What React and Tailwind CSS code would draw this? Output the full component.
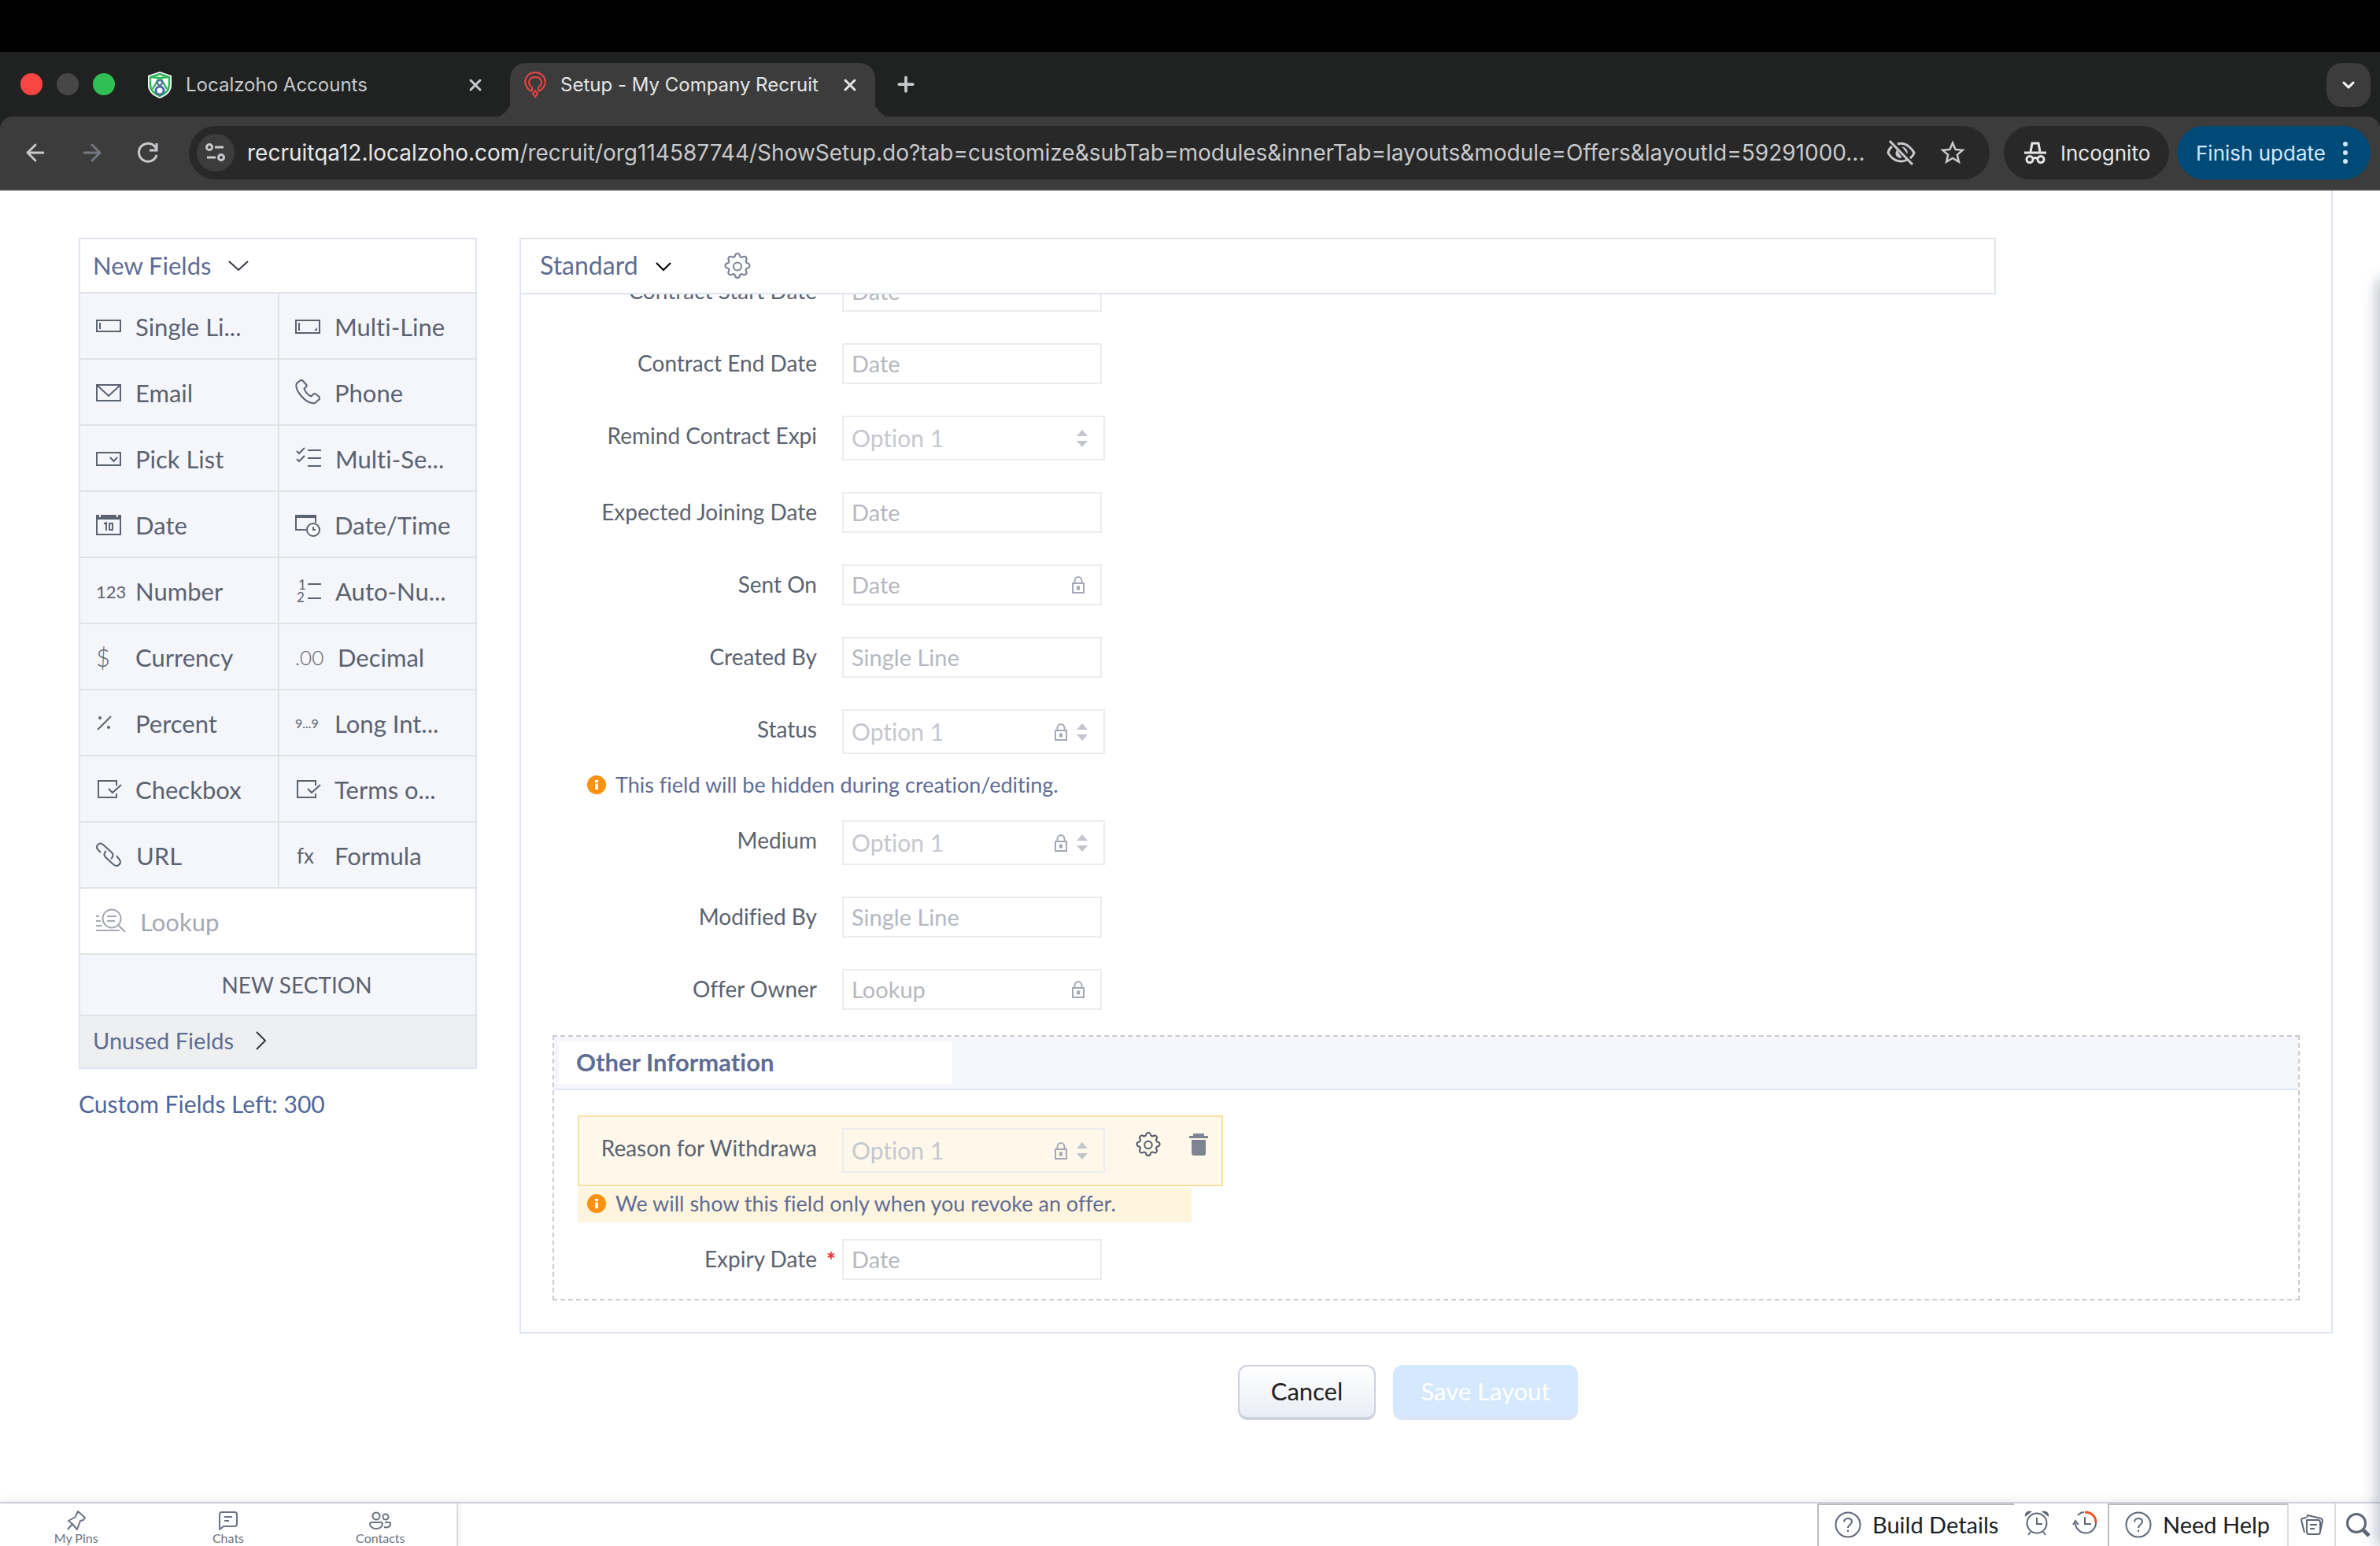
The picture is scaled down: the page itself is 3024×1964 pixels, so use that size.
import { ArrowLeft, ArrowRight, ChevronDown, Plus, X } from 'lucide-react';
import { MdOutlineStarBorder } from 'react-icons/md';

/* ── Icons ───────────────────────────────────── */
function Icon({ children, w = 32, h = 32, sw = 2, className = '' }) {
  return (
    <svg
      width={w}
      height={h}
      viewBox={`0 0 ${w} ${h}`}
      fill="none"
      stroke="currentColor"
      strokeWidth={sw}
      className={`shrink-0 overflow-visible ${className}`}
      aria-hidden="true"
    >
      {children}
    </svg>
  );
}

const CheckBoxIcon = () => (
  <Icon>
    <path d="M26 11V5H3v21h23v-5M16 15l5 5L32 10" />
  </Icon>
);

const GEAR =
  'M18 2c2 0 3 1.200 3.400 4l2.300 1c2.300-1.600 3.700-1.700 5.100-.3s1.300 2.800-.3 5.100l1 2.300c2.800.4 4 1.400 4 3.400s-1.200 3-4 3.400l-1 2.300c1.600 2.300 1.700 3.700.3 5.100s-2.800 1.300-5.100-.3l-2.300 1c-.4 2.800-1.400 4-3.400 4s-3-1.200-3.400-4l-2.300-1c-2.300 1.600-3.700 1.700-5.100.3s-1.300-2.800.3-5.100l-1-2.300c-2.800-.4-4-1.400-4-3.400s1.200-3 4-3.400l1-2.300c-1.600-2.300-1.700-3.700-.3-5.100s2.800-1.300 5.100.3l2.300-1c.4-2.800 1.400-4 3.400-4z';

const GearIcon = ({ size }) => (
  <svg width={size} height={size} viewBox="0 0 36 36" fill="none" stroke="currentColor" strokeWidth="2" aria-hidden="true">
    <path d={GEAR} />
    <circle cx="18" cy="18.500" r="5" />
  </svg>
);

const LockIcon = () => (
  <Icon w={16} h={22} className="text-[#a3a8b4]">
    <path d="M1 9h14v12H1zM3.500 9V6a4.500 5 0 0 1 9 0v3" />
    <path d="M8 12.500v5" strokeWidth="4" />
  </Icon>
);

const InfoIcon = () => (
  <svg width="24" height="24" viewBox="0 0 24 24" className="shrink-0" aria-hidden="true">
    <circle cx="12" cy="12" r="12" fill="#f9930f" />
    <path d="M10 6h4v3h-4zM10 10.500h4V18h-4z" fill="#fff" />
  </svg>
);

const HelpIcon = () => (
  <Icon w={34} h={34} className="text-[#5f6777]">
    <circle cx="17" cy="17" r="15.500" />
    <path d="M12 13.500c0-6 10-6 10-.5 0 4-5 4-5 8M17 23.500v2.500" />
  </Icon>
);

/* ── Data ────────────────────────────────────── */
const FIELD_TYPES = [
  { name: 'Single Li...', icon: <Icon><path d="M1 8h30v14H1zM5 11v8" /></Icon> },
  { name: 'Multi-Line', icon: <Icon><path d="M1 8h30v16H1zM5 11v10" /><path d="M28 17v4h-4z" fill="currentColor" stroke="none" /></Icon> },
  { name: 'Email', icon: <Icon><path d="M1 6h30v20H1zM1 6l15 14L31 6" /></Icon> },
  { name: 'Phone', icon: <Icon><path d="M7 0 2 4c-4 8 12 27 23 25l6-5-.5-3-5-4-2 .5-3 3c-4-1-8-6-9-10l3-2.500V6L9 0z" /></Icon> },
  { name: 'Pick List', icon: <Icon><path d="M1 8h30v16H1zM18 14l4.500 5 4.500-5" /></Icon> },
  { name: 'Multi-Se...', icon: <Icon w={33}><path d="M16 5h17M16 15h17M16 25h17M2 6l3 3 7-7M2 16l3 3 7-7" /></Icon> },
  { name: 'Date', icon: <Icon><path d="M1 3v25h30V3" /><path d="M0 3h4v3h2V3h20v3h2V3h4v6H0z" fill="currentColor" stroke="none" /><path d="M10 14.500 13 13v10M17 14h4v8h-4z" /></Icon> },
  { name: 'Date/Time', icon: <Icon><path d="M14 22H1V4h25v9" /><path d="M0 3h26v4H0z" fill="currentColor" stroke="none" /><circle cx="23" cy="22" r="8" fill="#fff" /><path d="M23 18v4h3" /></Icon> },
  { name: 'Number', icon: <span className="w-8 shrink-0 whitespace-nowrap text-[22px]">123</span> },
  {
    name: 'Auto-Nu...',
    icon: (
      <Icon w={33}>
        <path d="M16 7h17M16 25h17" />
        <text x="4" y="14" fontSize="17" fill="currentColor" stroke="none">1</text>
        <text x="2" y="30" fontSize="17" fill="currentColor" stroke="none">2</text>
      </Icon>
    ),
  },
  { name: 'Currency', icon: <span className="w-8 shrink-0 text-[31px] font-light">$</span> },
  { name: 'Decimal', icon: <span className="w-9 shrink-0 whitespace-nowrap text-[26px] font-light">.00</span> },
  { name: 'Percent', icon: <Icon><path d="M2 24 19 7" /><circle cx="5" cy="9" r="2" fill="currentColor" stroke="none" /><circle cx="16" cy="21" r="2" fill="currentColor" stroke="none" /></Icon> },
  { name: 'Long Int...', icon: <span className="w-8 shrink-0 whitespace-nowrap text-base">9...9</span> },
  { name: 'Checkbox', icon: <CheckBoxIcon /> },
  { name: 'Terms o...', icon: <CheckBoxIcon /> },
  { name: 'URL', icon: <Icon w={33}><path d="M6 12 3 9C-2 4 4-2 9 2l11 10c4 4-1 8-1 8M26 16l3 4c5 5-1 11-6 8L12 18c-4-4 1-8 1-8" /></Icon> },
  { name: 'Formula', icon: <span className="w-8 shrink-0 pl-0.5 text-[26px]">fx</span> },
];

const FIELDS = [
  { id: 'start', label: 'Contract Start Date', value: 'Date' },
  { id: 'end', label: 'Contract End Date', value: 'Date' },
  { id: 'remind', label: 'Remind Contract Expi', value: 'Option 1', select: true },
  { id: 'joining', label: 'Expected Joining Date', value: 'Date' },
  { id: 'sent', label: 'Sent On', value: 'Date', locked: true },
  { id: 'created', label: 'Created By', value: 'Single Line' },
  { id: 'status', label: 'Status', value: 'Option 1', select: true, locked: true, hint: 'This field will be hidden during creation/editing.' },
  { id: 'medium', label: 'Medium', value: 'Option 1', select: true, locked: true },
  { id: 'modified', label: 'Modified By', value: 'Single Line' },
  { id: 'owner', label: 'Offer Owner', value: 'Lookup', locked: true },
];

/* ── Form field ──────────────────────────────── */
function Field({ id, label, value, select, locked, required }) {
  return (
    <div className="flex items-start text-[#5b6270]">
      <label htmlFor={id} className="w-[276px] overflow-hidden whitespace-nowrap text-right text-[28px] leading-[50px]">
        {label}
      </label>
      <span className="w-8 pl-1 text-center text-[28px] leading-[52px] font-bold text-red-500">{required && '*'}</span>
      {select ? (
        <div className="relative">
          <select
            id={id}
            className="block h-[57px] w-[334px] appearance-none border-2 border-[#ececef] bg-transparent pl-2.5 text-[30px] text-[#c5c8cf]"
          >
            <option>{value}</option>
          </select>
          <div className="pointer-events-none absolute inset-y-0 right-[22px] flex items-center gap-3">
            {locked && <LockIcon />}
            <svg width="14" height="22" viewBox="0 0 14 22" fill="#c2c5cb" aria-hidden="true">
              <path d="M7 0l7 8H0zM0 14h14l-7 8z" />
            </svg>
          </div>
        </div>
      ) : (
        <div className="relative">
          <input
            id={id}
            placeholder={value}
            className="block h-[52px] w-[330px] border-2 border-[#ececef] bg-transparent pb-0.5 pl-2.5 text-[29px] placeholder:text-[#b5b8bf]"
          />
          {locked && (
            <div className="pointer-events-none absolute inset-y-0 right-[22px] flex items-center">
              <LockIcon />
            </div>
          )}
        </div>
      )}
    </div>
  );
}

/* ── Browser chrome ──────────────────────────── */
function BrowserChrome() {
  return (
    <header className="font-[Inter,sans-serif]">
      <div className="h-[66px] bg-black" />
      <div className="flex h-[82px] items-end bg-[#1f2221] pr-3 pl-[26px] text-[#c7c9cc]">
        <div className="flex h-[82px] items-center gap-[18px]">
          <span className="size-7 rounded-full bg-[#f94642]" />
          <span className="size-7 rounded-full bg-[#474747]" />
          <span className="size-7 rounded-full bg-[#2fbf54]" />
        </div>
        <div className="ml-10 flex h-[68px] w-[462px] items-center pb-3">
          <svg width="34" height="34" viewBox="0 0 34 34" aria-hidden="true">
            <path d="M17 0l15 5v12c0 9-7 14-15 17C9 31 2 26 2 17V5z" fill="#fff" />
            <path d="M17 3l12 4v10c0 7-5 11-12 14C10 28 5 24 5 17V7z" fill="none" stroke="#2fb457" strokeWidth="2.500" />
            <path d="M6 7l10 1-8 14M28 7L18 8l8 14" fill="none" stroke="#2fb457" strokeWidth="2.500" />
            <circle cx="17" cy="14" r="3" fill="none" stroke="#4a6aa5" strokeWidth="2" />
            <circle cx="17" cy="24" r="5" fill="none" stroke="#4a6aa5" strokeWidth="3" />
          </svg>
          <span className="ml-4 flex-1 text-2xl">Localzoho Accounts</span>
          <button type="button" aria-label="Close tab" className="mr-8"><X size={24} strokeWidth={3} /></button>
        </div>
        <div className="relative flex h-[68px] w-[464px] items-center rounded-t-[20px] bg-[#3c3c3c] pb-3 pl-[18px] text-[#e6e6e6]">
          <span className="absolute bottom-0 -left-5 size-5 overflow-hidden">
            <span className="block size-5 rounded-br-[20px] shadow-[8px_8px_0_0_#3c3c3c]" />
          </span>
          <span className="absolute -right-5 bottom-0 size-5 overflow-hidden">
            <span className="block size-5 rounded-bl-[20px] shadow-[-8px_8px_0_0_#3c3c3c]" />
          </span>
          <svg width="28" height="34" viewBox="0 0 28 34" fill="none" stroke="#ef4444" strokeWidth="2" aria-hidden="true">
            <path d="M10 25C-4 19 0 1 14 1s18 18 4 24" />
            <path d="M10 20c-7-5-4-13 4-13s11 8 4 13M10 20v4M18 20v4M14 24l3 4-3 4-3-4z" />
          </svg>
          <span className="ml-[18px] flex-1 text-2xl">Setup - My Company Recruit</span>
          <button type="button" aria-label="Close tab" className="mr-5"><X size={24} strokeWidth={3} /></button>
        </div>
        <button type="button" aria-label="New tab" className="mb-[26px] ml-6"><Plus size={30} strokeWidth={3} /></button>
        <button type="button" aria-label="Search tabs" className="mb-3 ml-auto flex size-14 items-center justify-center rounded-[20px] bg-[#3c3c3c] text-white">
          <ChevronDown size={24} strokeWidth={3} />
        </button>
      </div>

      {/* Toolbar */}
      <div className="bg-[#1f2221]">
        <div className="flex h-[94px] items-center rounded-t-2xl border-b-2 border-[#474747] bg-[#3c3c3c] pr-3 pl-7 text-[28px] text-[#c7c9cc]">
          <button type="button" aria-label="Back"><ArrowLeft size={34} /></button>
          <button type="button" aria-label="Forward" className="ml-[38px] text-[#73777f]"><ArrowRight size={34} /></button>
          <button type="button" aria-label="Reload" className="ml-[38px]">
            <Icon sw={3}><path d="M26 10A11.500 11.500 0 1 0 27 19M27 4v9h-9" /></Icon>
          </button>
          <div className="ml-9 flex h-[68px] min-w-0 flex-1 items-center rounded-full bg-[#282828] pr-7 pl-2.5">
            <span className="flex size-12 shrink-0 items-center justify-center rounded-full bg-[#3c3c3c]">
              <Icon w={28} h={28} sw={3}>
                <circle cx="6" cy="7" r="3.500" />
                <path d="M13 7h11M3 20h11" />
                <circle cx="21" cy="20" r="3.500" />
              </Icon>
            </span>
            <span className="ml-4 min-w-0 truncate">
              <span className="text-[#e6e6e6]">recruitqa12.localzoho.com</span>
              /recruit/org114587744/ShowSetup.do?tab=customize&amp;subTab=modules&amp;innerTab=layouts&amp;module=Offers&amp;layoutId=59291000...
            </span>
            <Icon w={38} h={34} sw={3} className="ml-auto">
              <path d="M7 9C3 12 2 17 2 17s5 11 17 11c3 0 5-1 7-2M14 6c13-4 21 11 21 11s-1 4-5 7M4 2l29 30" />
              <path d="M13 14c-3 6 1 10 6 9zM20 10c4 0 7 4 6 8" fill="currentColor" strokeWidth="1" />
            </Icon>
            <MdOutlineStarBorder size={38} className="ml-[27px] shrink-0" />
          </div>
          <div className="ml-[18px] flex h-[68px] w-[210px] items-center rounded-full bg-[#282828] pl-[26px] text-[#e6e6e6]">
            <svg width="28" height="28" viewBox="0 0 28 28" fill="none" stroke="currentColor" strokeWidth="3" aria-hidden="true">
              <path d="M0 14h28" />
              <path d="M8 13L10 2h8l2 11" />
              <circle cx="7" cy="22.500" r="4" />
              <circle cx="21" cy="22.500" r="4" />
              <path d="M11 21.500q3-2 6 0" />
            </svg>
            <span className="ml-[18px] text-[26px]">Incognito</span>
          </div>
          <button type="button" className="ml-2.5 flex h-[68px] w-[246px] items-center rounded-full bg-[#004a77] pl-6 text-[26px] text-[#d0e6fb]">
            Finish update
            <svg width="8" height="28" viewBox="0 0 8 28" fill="currentColor" className="ml-auto mr-7" aria-hidden="true">
              <circle cx="4" cy="3" r="3" />
              <circle cx="4" cy="14" r="3" />
              <circle cx="4" cy="25" r="3" />
            </svg>
          </button>
        </div>
      </div>
    </header>
  );
}

/* ── Field palette ───────────────────────────── */
function FieldPalette() {
  return (
    <aside className="mt-[60px] w-[506px] shrink-0 text-[31px] text-[#5b6270]">
      <div className="border-2 border-[#dfe4f4]">
        <button type="button" className="flex h-[69px] w-full items-center border-b-2 border-[#e2e3e5] pl-4 text-[#5f6c93]">
          New Fields
          <Icon w={26} h={14} className="ml-[22px] text-[#33373f]"><path d="M1 1l12 11L25 1" /></Icon>
        </button>
        <div className="grid grid-cols-[1fr_249px]">
          {FIELD_TYPES.map(({ name, icon }) => (
            <button
              key={name}
              type="button"
              className="flex h-[84px] items-center gap-[18px] border-b-2 border-[#e2e3e5] bg-[#f4f6fb] pt-0.5 pl-5 text-left whitespace-nowrap odd:border-r-2"
            >
              {icon}
              {name}
            </button>
          ))}
        </div>
        <button type="button" className="flex h-[84px] w-full items-center gap-[18px] border-b-2 border-[#e2e3e5] pt-0.5 pl-5 text-[#a5a9b4]">
          <Icon w={38}>
            <circle cx="20" cy="12" r="11.500" />
            <path d="M28 20l9 9M14 9h12M14 15h10M0 9h4M0 15h6M0 21h8M0 27h30" />
          </Icon>
          Lookup
        </button>
        <button type="button" className="h-[78px] w-full border-b-2 border-[#e2e3e5] bg-[#f4f6fb] pl-12 text-[28px]">
          NEW SECTION
        </button>
        <button type="button" className="flex h-[65px] w-full items-center bg-[#eeeff1] pb-1 pl-4 text-[29px] text-[#5f6c93]">
          Unused Fields
          <Icon w={14} h={24} className="ml-7 text-[#33373f]"><path d="M1 1l11 11L1 23" /></Icon>
        </button>
      </div>
      <p className="mt-6 text-[30px] leading-10 text-[#50669c]">Custom Fields Left: 300</p>
    </aside>
  );
}

/* ── Layout editor ───────────────────────────── */
function LayoutEditor() {
  return (
    <section className="min-w-0 flex-1">
      <div className="border-r-2 border-b-2 border-[#dfe4f4] pt-[60px]">
        <div className="border-l-2 border-[#dfe4f4] pb-10">
          <div className="mr-[426px] flex h-[72px] items-center border-2 border-l-0 border-[#dfe4f4] border-t-[#e2e3e5] pl-6">
            <button type="button" className="flex items-center pb-0.5 text-[32px] text-[#5f6c93]">
              Standard
              <Icon w={20} h={12} className="mt-1 ml-[22px] text-black"><path d="M1 1l9 9 9-9" /></Icon>
            </button>
            <button type="button" aria-label="Layout settings" className="ml-[66px] text-[#7a8090]">
              <GearIcon size={36} />
            </button>
          </div>

          {/* Rows scrolled under the header */}
          <div className="overflow-hidden pl-[100px]">
            <div className="-mt-[30px]">
              {FIELDS.map(({ hint, ...field }) => (
                <div key={field.id} className={field.id === 'owner' ? 'pb-8' : hint ? '' : 'pb-10'}>
                  <Field {...field} />
                  {hint && (
                    <p className="-ml-4 flex items-center gap-3 pt-6 pb-[30px] text-[27px] leading-[30px] text-[#5f6c93]">
                      <InfoIcon />
                      {hint}
                    </p>
                  )}
                </div>
              ))}
            </div>
          </div>

          <div className="mx-10 border-2 border-dashed border-[#cbcbcb] pb-6">
            <div className="h-[68px] border-b-2 border-[#dfe4f4] bg-[#f4f6fb] p-1.5">
              <h2 className="h-[54px] w-[500px] bg-white pl-[22px] text-[31px] leading-[52px] font-bold text-[#5f6c93]">
                Other Information
              </h2>
            </div>
            <div className="mt-8 ml-[30px] flex h-[90px] w-[820px] items-start border-2 border-[#f9e0a0] bg-[#fff8ea] pt-3.5 pl-[26px]">
              <Field id="reason" label="Reason for Withdrawa" value="Option 1" select locked />
              <button type="button" aria-label="Field settings" className="mt-1 ml-[38px] text-[#4f5768]">
                <GearIcon size={34} />
              </button>
              <button type="button" aria-label="Delete field" className="mt-1.5 ml-[35px] text-[#7e8492]">
                <svg width="24" height="30" viewBox="0 0 24 30" fill="currentColor" aria-hidden="true">
                  <path d="M5 1h14v3h5v3H0V4h5zM3 9h18v17q0 3-3 3H6q-3 0-3-3z" />
                </svg>
              </button>
            </div>
            <p className="mt-0.5 ml-[30px] flex h-11 w-[780px] items-center gap-3 bg-[#fff5de] pb-1 pl-3 text-[27px] text-[#5f6c93]">
              <InfoIcon />
              We will show this field only when you revoke an offer.
            </p>
            <div className="mt-[21px] pl-[58px]">
              <Field id="expiry" label="Expiry Date" value="Date" required />
            </div>
          </div>
        </div>
      </div>

      <div className="mt-10 flex justify-center gap-[22px] pr-[46px] text-[31px]">
        <button type="button" className="h-[70px] w-[175px] rounded-xl border-2 border-b-4 border-[#cdd2dc] bg-linear-to-b from-white to-[#e9edf6] pb-0.5 text-[#222]">
          Cancel
        </button>
        <button type="button" className="h-[70px] w-[235px] rounded-xl border-b-4 border-[#dce3f1] bg-[#d4e8fe] text-white">
          Save Layout
        </button>
      </div>
    </section>
  );
}

/* ── Bottom bar ──────────────────────────────── */
function BottomBar() {
  return (
    <footer className="flex h-14 border-t-2 border-[#cdd1da] bg-white text-[29px] text-[#1c1f26] shadow-[0_-2px_10px_rgba(0,0,0,.08)]">
      <nav className="flex w-[582px] border-r-2 border-[#dcdcdc] text-base leading-5 text-[#6a7283] shadow-[3px_0_4px_rgba(0,0,0,.06)]">
        <button type="button" className="flex flex-1 flex-col items-center pt-2">
          <Icon w={26} h={26}><path d="M15 2l9 8-2 3-4 1-4 11-6-7-5-4 9-5 1-3zM8 18l-6 7" strokeLinejoin="round" /></Icon>
          My Pins
        </button>
        <button type="button" className="flex flex-1 flex-col items-center pt-2">
          <Icon w={26} h={26}><path d="M2 25V6q0-3 3-3h16q3 0 3 3v12q0 3-3 3H7zM8 9h10M8 14h6" strokeLinejoin="round" /></Icon>
          Chats
        </button>
        <button type="button" className="flex flex-1 flex-col items-center pt-2">
          <Icon w={28} h={26}>
            <circle cx="9" cy="8" r="4.500" />
            <circle cx="21" cy="9" r="3.500" />
            <path d="M1 18q0-2 2-2h12q2 0 2 2c0 8-16 8-16 0zM20 16h5q2 0 2 2c0 4-4 5-8 4" />
          </Icon>
          Contacts
        </button>
      </nav>
      <button type="button" className="ml-auto flex w-[250px] items-center border-t-2 border-l-2 border-[#bdbdbd] pb-0.5 pl-5">
        <HelpIcon />
        <span className="ml-3.5">Build Details</span>
      </button>
      <button type="button" aria-label="Reminders" className="ml-3 pb-1.5 text-[#5f6777]">
        <Icon w={34} h={34}>
          <circle cx="17" cy="18" r="12.500" />
          <path d="M17 11v8h7M9 29l-3 4M25 29l3 4" />
          <path d="M2 10C1 4 6 1 11 3zM32 10c1-6-4-9-9-7z" fill="currentColor" stroke="none" />
        </Icon>
      </button>
      <button type="button" aria-label="Recent items" className="ml-7 pb-1.5 text-[#5f6777]">
        <Icon w={32} h={32}>
          <path d="M4 17a13 13 0 1 0 26-1M7 7q4-4 8-4M1 19l3-5 4 5M16 9v9h8" />
          <path d="M16 3c8 0 14 5 14 13" stroke="#f4511e" strokeWidth="3" />
        </Icon>
      </button>
      <button type="button" className="ml-[13px] flex w-[230px] items-center border-x-2 border-t-2 border-[#bdbdbd] border-r-[#dcdcdc] pb-0.5 pl-5">
        <HelpIcon />
        <span className="ml-3.5">Need Help</span>
      </button>
      <button type="button" aria-label="Notes" className="flex w-[60px] items-center justify-center border-r-2 border-[#dcdcdc] text-[#5f6777]">
        <Icon w={30} h={30}>
          <path d="M9 9h14q3 0 3 3v12q0 3-3 3H12q-3 0-3-3zM13 15h9M13 20h6M6 25L2 9q0-2 2-2l4-1M9 6l1-3 17 4q2 1 2 3l-3 14" strokeLinejoin="round" />
        </Icon>
      </button>
      <button type="button" aria-label="Search" className="flex w-14 items-center justify-center text-[#5f6777]">
        <Icon sw={3}>
          <circle cx="14" cy="14" r="11.500" />
          <path d="M23 23l7 7" strokeWidth="5" />
        </Icon>
      </button>
    </footer>
  );
}

export default function App() {
  return (
    <div className="relative flex min-h-screen flex-col overflow-hidden bg-white font-[Lato,sans-serif] [font-variant-ligatures:none]">
      <BrowserChrome />
      <main className="flex flex-1 gap-[54px] pr-[60px] pl-[100px]">
        <FieldPalette />
        <LayoutEditor />
      </main>
      <BottomBar />
      {/* Shadow of the drawer parked off the right edge */}
      <div className="pointer-events-none absolute top-[356px] -right-5 bottom-0 w-5 rounded-l-xl shadow-[0_0_16px_6px_rgba(90,100,130,.35)]" />
    </div>
  );
}
